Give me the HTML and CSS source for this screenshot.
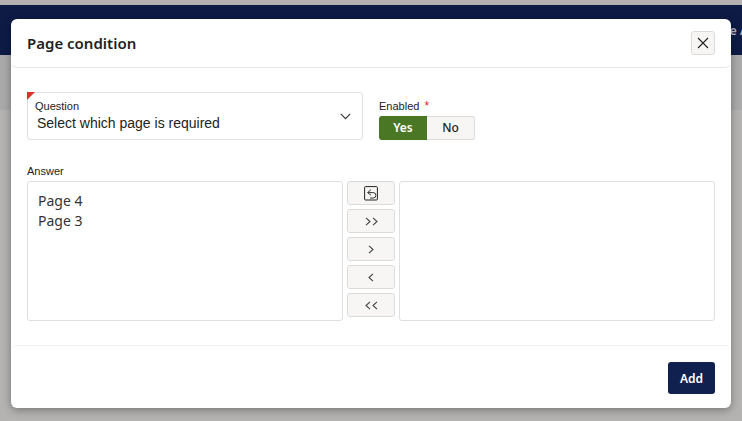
FILE: index.html
```html
<!DOCTYPE html>
<html lang="en">
<head>
  <meta charset="UTF-8" />
  <meta name="viewport" content="width=device-width, initial-scale=1.0" />
  <title>Page condition</title>
  <link rel="stylesheet" href="styles.css">
</head>
<body>
  <div class="backdrop">
    <div class="topstrip"></div>
    <div class="navbar"><span class="navbar-text">e A</span></div>
    <div class="subbar"></div>
  </div>
  <div class="modal">
    <div class="modal-header">
      <h1 class="modal-title">Page condition</h1>
      <button class="close-btn" aria-label="Close">
        <svg width="12" height="12" viewBox="0 0 12 12"><path d="M1 1l10 10M11 1L1 11" stroke="#222" stroke-width="1.1" fill="none"/></svg>
      </button>
    </div>
    <div class="modal-body">
      <div class="top-row">
        <div class="select-box">
          <span class="corner"></span>
          <div class="select-text">
            <span class="select-label">Question</span>
            <span class="select-value">Select which page is required</span>
          </div>
          <svg class="chevron" width="11" height="7" viewBox="0 0 11 7"><path d="M.8.9l4.7 4.7L10.2.9" stroke="#333" stroke-width="1.1" fill="none"/></svg>
        </div>
        <div class="enabled">
          <div class="enabled-label">Enabled <span class="star">*</span></div>
          <div class="toggle">
            <span class="toggle-yes">Yes</span>
            <span class="toggle-no">No</span>
          </div>
        </div>
      </div>
      <div class="answer-label">Answer</div>
      <div class="shuttle">
        <div class="list-box">
          <div class="list-item">Page 4</div>
          <div class="list-item">Page 3</div>
        </div>
        <div class="shuttle-btns">
          <button class="move-btn"><svg width="15" height="15" viewBox="0 0 15 15"><rect x=".6" y=".6" width="12.8" height="13.4" rx="1" stroke="#222" fill="none"/><path d="M7 3.6L3.6 6.6 7 9.2M3.8 6.6h5.4a2.6 2.6 0 0 1 0 5.4H6" stroke="#333" fill="none"/></svg></button>
          <button class="move-btn"><svg width="13" height="9" viewBox="0 0 13 9"><path d="M1 .8l4 3.7-4 3.7M8 .8l4 3.7-4 3.7" stroke="#444" stroke-width="1.1" fill="none"/></svg></button>
          <button class="move-btn"><svg width="6" height="9" viewBox="0 0 6 9"><path d="M1 .8l4 3.7-4 3.7" stroke="#444" stroke-width="1.1" fill="none"/></svg></button>
          <button class="move-btn"><svg width="6" height="9" viewBox="0 0 6 9"><path d="M5 .8L1 4.5l4 3.7" stroke="#444" stroke-width="1.1" fill="none"/></svg></button>
          <button class="move-btn"><svg width="13" height="9" viewBox="0 0 13 9"><path d="M5 .8L1 4.5l4 3.7M12 .8L8 4.5l4 3.7" stroke="#444" stroke-width="1.1" fill="none"/></svg></button>
        </div>
        <div class="list-box"></div>
      </div>
    </div>
    <div class="modal-footer">
      <button class="add-btn">Add</button>
    </div>
  </div>
</body>
</html>
```
FILE: styles.css
```css
html, body {
  margin: 0;
  height: 100%;
  overflow: hidden;
}
body {
  background: #b4b3b1;
  font-family: "Liberation Sans", Arial, sans-serif;
  position: relative;
}
.topstrip {
  height: 5px;
  background: #b4b3b1;
}
.navbar {
  height: 50px;
  background: #0d1b45;
  display: flex;
  justify-content: flex-end;
  align-items: center;
  overflow: hidden;
}
.navbar-text {
  color: #b4b8c6;
  font: 600 12px "Noto Sans", sans-serif;
  margin-right: -6px;
}
.subbar {
  height: 55px;
  background: #a9aaa9;
}
.modal {
  position: absolute;
  left: 11px;
  top: 19px;
  width: 720px;
  height: 389px;
  background: #fff;
  border-radius: 6px;
  box-shadow: 0 2px 8px rgba(0, 0, 0, 0.35);
  display: flex;
  flex-direction: column;
}
.modal-header {
  height: 48px;
  border-bottom: 1px solid #e6e6e6;
  border-radius: 0 0 6px 6px;
  display: flex;
  justify-content: space-between;
  align-items: center;
  padding: 0 16px;
}
.modal-title {
  margin: 0;
  font: 600 15px "Noto Sans", sans-serif;
  color: #1f1f1f;
}
.close-btn {
  width: 24px;
  height: 24px;
  padding: 0;
  background: #f7f6f5;
  border: 1px solid #dcdbd9;
  border-radius: 3px;
  display: flex;
  align-items: center;
  justify-content: center;
}
.modal-body {
  flex: 1;
  padding: 24px 16px 0;
}
.top-row {
  display: flex;
  gap: 16px;
}
.select-box {
  position: relative;
  width: 336px;
  height: 48px;
  box-sizing: border-box;
  border: 1px solid #e0e0e0;
  border-radius: 3px;
  display: flex;
  justify-content: space-between;
  align-items: center;
  padding: 0 11px 0 7px;
}
.corner {
  position: absolute;
  left: -1px;
  top: -1px;
  border-top: 8px solid #d8352a;
  border-right: 8px solid transparent;
}
.select-text {
  display: flex;
  flex-direction: column;
}
.select-label {
  font-size: 11px;
  line-height: 14px;
  color: #222;
}
.select-value {
  font-size: 14px;
  line-height: 20px;
  margin-left: 2px;
  color: #222;
}
.enabled-label {
  font-size: 11px;
  line-height: 14px;
  color: #222;
  margin-top: 7px;
}
.star {
  color: #e8202a;
  font-size: 12px;
  margin-left: 2px;
}
.toggle {
  display: flex;
  margin-top: 3px;
  height: 24px;
  width: 96px;
  font: 600 12px/24px "Noto Sans", sans-serif;
  text-align: center;
}
.toggle-yes {
  width: 48px;
  background: #4a7723;
  color: #fff;
  border-radius: 3px 0 0 3px;
}
.toggle-no {
  width: 48px;
  box-sizing: border-box;
  line-height: 22px;
  background: #f7f6f5;
  color: #222;
  border: 1px solid #dcdbd9;
  border-left: 0;
  border-radius: 0 3px 3px 0;
  font-weight: 500;
}
.answer-label {
  font-size: 11px;
  line-height: 14px;
  color: #222;
  margin-top: 24px;
  margin-bottom: 3px;
}
.shuttle {
  display: flex;
  gap: 4px;
  height: 140px;
}
.list-box {
  width: 316px;
  box-sizing: border-box;
  border: 1px solid #e0e0e0;
  border-radius: 3px;
  padding: 9px 10px;
}
.list-item {
  font: 400 14px/20px "Noto Sans", sans-serif;
  color: #333;
}
.shuttle-btns {
  display: flex;
  flex-direction: column;
  gap: 4px;
}
.move-btn {
  width: 48px;
  height: 24px;
  padding: 0;
  background: #f7f6f5;
  border: 1px solid #dcdbd9;
  border-radius: 3px;
  display: flex;
  align-items: center;
  justify-content: center;
}
.modal-footer {
  height: 63px;
  border-top: 1px solid #efefef;
  border-radius: 6px 6px 0 0;
  display: flex;
  justify-content: flex-end;
  padding: 16px 16px 0;
  box-sizing: border-box;
}
.add-btn {
  width: 47px;
  height: 32px;
  padding: 0;
  background: #10214f;
  color: #fff;
  border: 0;
  border-radius: 3px;
  font: 600 12px "Noto Sans", sans-serif;
}
```
